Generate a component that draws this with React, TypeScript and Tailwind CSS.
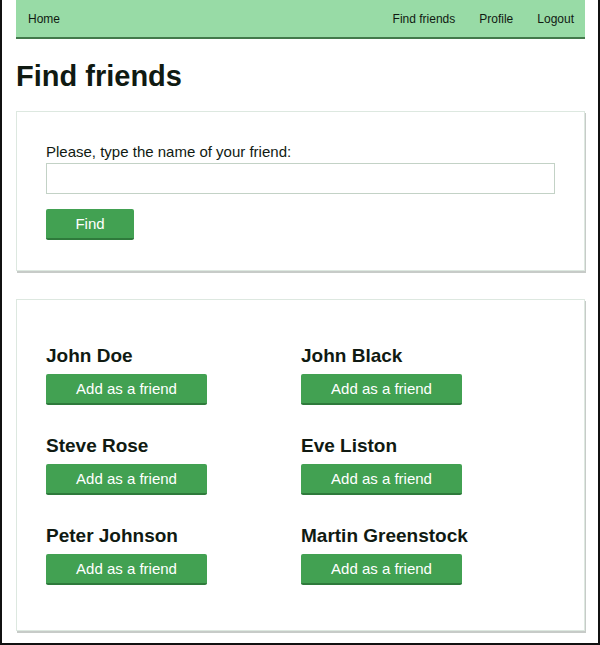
import React from 'react';

const friends = [
  'John Doe',
  'John Black',
  'Steve Rose',
  'Eve Liston',
  'Peter Johnson',
  'Martin Greenstock',
];

const GreenButton: React.FC<{ label: string; className?: string }> = ({ label, className = '' }) => (
  <button
    className={`h-[31px] bg-[#42a152] border-b-2 border-[#2e7a3b] rounded-[2px] text-white text-[15px] leading-none ${className}`}
  >
    {label}
  </button>
);

export default function App() {
  return (
    <div
      className="w-[600px] h-[645px] box-border border-l-2 border-r-2 border-b-2 border-[#111] bg-white pl-[14px] pr-[13px] text-[#101a12]"
      style={{ fontFamily: '"Liberation Sans", Arial, sans-serif' }}
    >
      {/* Nav */}
      <nav className="h-[39px] bg-[#98dba6] border-b-2 border-[#43794b] flex items-center justify-between pl-3 pr-[11px] text-[12px]">
        <a>Home</a>
        <div className="flex items-center gap-6">
          <a>Find friends</a>
          <a>Profile</a>
          <a>Logout</a>
        </div>
      </nav>

      <h1 className="mt-5 mb-[18px] text-[29px] leading-[34px] font-bold">Find friends</h1>

      {/* Search card */}
      <div className="border border-[#dde8e0] shadow-[1px_2px_0_#c7cbc8] pt-[31px] pb-[30px] px-[29px]">
        <label className="block text-[15px] leading-[18px] mb-[2px]">
          Please, type the name of your friend:
        </label>
        <input
          type="text"
          className="block w-[509px] h-[31px] border border-[#c3d2c6] bg-white outline-none"
        />
        <GreenButton label="Find" className="mt-[15px] w-[88px]" />
      </div>

      {/* Results card */}
      <div className="mt-[28px] border border-[#dde8e0] shadow-[1px_2px_0_#c7cbc8] pt-[45px] pb-[45px] px-[29px]">
        <div className="grid grid-cols-2 w-[510px] gap-y-[30px]">
          {friends.map(name => (
            <div key={name} className="flex flex-col items-start">
              <h2 className="text-[19px] leading-[22px] font-bold mb-[7px]">{name}</h2>
              <GreenButton label="Add as a friend" className="w-[161px]" />
            </div>
          ))}
        </div>
      </div>
    </div>
  );
}
